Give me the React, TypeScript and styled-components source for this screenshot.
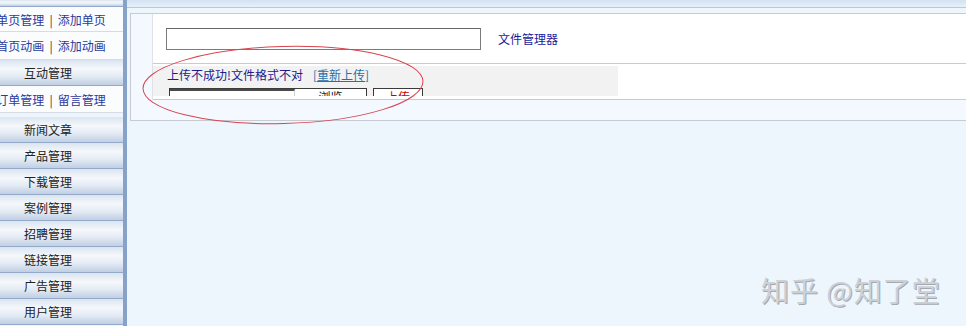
import React from "react";
import styled, { createGlobalStyle } from "styled-components";

const Global = createGlobalStyle`
  html, body { margin: 0; padding: 0; }
  body {
    width: 966px; height: 326px; overflow: hidden;
    background: #eef6fd;
    font-family: "Noto Sans CJK SC", "Noto Sans", sans-serif;
    font-size: 12px;
  }
`;

const Page = styled.div`
  position: relative;
  display: flex;
  width: 966px;
  height: 326px;
  overflow: hidden;
`;

const Sidebar = styled.aside`
  width: 123px;
  flex: none;
  overflow: hidden;
  border-right: 4px solid #86a2c8;
  background: #eef4fb;
`;

const Menu = styled.div`
  width: 150px;
  margin-left: -27px;
  display: flex;
  flex-direction: column;
`;

const SectionButton = styled.div<{ $h?: number }>`
  height: ${(p) => p.$h ?? 25}px;
  border-bottom: 1px solid #93aacb;
  background: linear-gradient(to bottom, #dae4f0 0%, #f5f8fc 35%, #e4ebf4 65%, #c0cfe3 100%);
  display: flex;
  align-items: center;
  justify-content: center;
  color: #222;
  font-size: 12px;
  line-height: 1;
`;

const LinkRow = styled.div<{ $h: number }>`
  height: ${(p) => p.$h}px;
  border-bottom: 1px solid #d6dce6;
  background: #fbfcfe;
  display: flex;
  align-items: center;
  justify-content: center;
  padding-left: 6px;
  font-size: 12px;
  color: #2a3a9c;
`;

const Sep = styled.span`
  color: #333;
  margin: 0 5px;
`;

const Gap = styled.div<{ $h: number }>`
  height: ${(p) => p.$h}px;
  background: #eef4fb;
`;

const Main = styled.main`
  flex: 1;
  display: flex;
  flex-direction: column;
  background: #eef6fd;
`;

const TopStrip = styled.div`
  height: 7px;
  border-bottom: 1px solid #b9c7d6;
  background: linear-gradient(to bottom, #d2e2f2, #e8f1fa);
`;

const Panel = styled.section`
  margin: 5px 0 0 3px;
  height: 106px;
  border: 1px solid #c7ccd2;
  border-right: none;
  background: #f3f9fe;
  padding-left: 21px;
  display: flex;
  flex-direction: column;
`;

const FormTable = styled.div`
  display: flex;
  flex-direction: column;
  border-left: 1px solid #dfe3e8;
  background: #fff;
`;

const FormRow = styled.div<{ $h: number }>`
  height: ${(p) => p.$h}px;
  border-bottom: 1px solid #c9cbcd;
  display: flex;
  align-items: center;
  background: #fff;
`;

const PathInput = styled.input`
  box-sizing: border-box;
  margin-left: 13px;
  width: 315px;
  height: 22px;
  border: 1px solid #7b7b7b;
  border-top-color: #666;
  background: #fff;
  padding: 0;
`;

const FileLink = styled.a`
  margin-left: 17px;
  color: #1a1a9e;
  font-size: 12px;
  text-decoration: none;
`;

const UploadFrame = styled.div`
  align-self: flex-end;
  margin-top: 2px;
  width: 451px;
  height: 30px;
  margin-bottom: 3px;
  padding-left: 14px;
  background: #f2f2f3;
  overflow: hidden;
  display: flex;
  flex-direction: column;
`;

const MsgLine = styled.div`
  height: 19px;
  display: flex;
  align-items: center;
  font-size: 12px;
  color: #1c1c8e;
  white-space: nowrap;
`;

const Retry = styled.span`
  margin-left: 10px;
  color: #2a6fa8;
  a { color: #2a6fa8; text-decoration: underline; }
`;

const FileControls = styled.div`
  margin-top: 5px;
  display: flex;
  gap: 6px;
  padding-left: 2px;
`;

const FileBox = styled.div`
  width: 196px;
  height: 14px;
  border: 1px solid #3a3a3a;
  border-bottom: none;
  display: flex;
  background: #fff;
`;

const FileText = styled.div`
  width: 124px;
  border-top: 2px solid #4a4a4a;
  border-right: 1px solid #d0d0d0;
  background: #fff;
`;

const Browse = styled.div`
  flex: 1;
  display: flex;
  justify-content: center;
  font-size: 12px;
  line-height: 12px;
  padding-top: 2px;
  color: #111;
`;

const UploadBtn = styled.div`
  width: 48px;
  height: 14px;
  border: 1px solid #3a3a3a;
  border-bottom: none;
  display: flex;
  justify-content: center;
  font-size: 12px;
  line-height: 12px;
  padding-top: 2px;
  color: #c00;
  background: #fff;
`;

const Ring = styled.svg`
  position: absolute;
  left: 0;
  top: 0;
  pointer-events: none;
`;

const Watermark = styled.div`
  position: absolute;
  left: 761px;
  top: 270px;
  font-size: 28px;
  letter-spacing: 1px;
  color: #cdd1d6;
  text-shadow: 1px 1px 0 #a3a9b0;
  white-space: nowrap;
`;

const buttons = ["新闻文章", "产品管理", "下载管理", "案例管理", "招聘管理", "链接管理", "广告管理", "用户管理"];

export default function App() {
  return (
    <Page>
      <Global />
      <Sidebar>
        <Menu>
          <SectionButton $h={6} />
          <LinkRow $h={24}>
            <span>单页管理</span><Sep>|</Sep><span>添加单页</span>
          </LinkRow>
          <LinkRow $h={27}>
            <span>首页动画</span><Sep>|</Sep><span>添加动画</span>
          </LinkRow>
          <SectionButton>互动管理</SectionButton>
          <LinkRow $h={26}>
            <span>订单管理</span><Sep>|</Sep><span>留言管理</span>
          </LinkRow>
          <Gap $h={4} />
          {buttons.map((b) => (
            <SectionButton key={b}>{b}</SectionButton>
          ))}
        </Menu>
      </Sidebar>
      <Main>
        <TopStrip />
        <Panel>
          <FormTable>
            <FormRow $h={49}>
              <PathInput type="text" />
              <FileLink href="#">文件管理器</FileLink>
            </FormRow>
            <FormRow $h={35}>
              <UploadFrame>
                <MsgLine>
                  上传不成功!文件格式不对
                  <Retry>[<a href="#">重新上传</a>]</Retry>
                </MsgLine>
                <FileControls>
                  <FileBox>
                    <FileText />
                    <Browse>浏览</Browse>
                  </FileBox>
                  <UploadBtn>上传</UploadBtn>
                </FileControls>
              </UploadFrame>
            </FormRow>
          </FormTable>
        </Panel>
      </Main>
      <Ring width="966" height="326" viewBox="0 0 966 326">
        <ellipse cx="283" cy="85" rx="140" ry="38.5" fill="none" stroke="#d8434f" strokeWidth="1" transform="rotate(-1.5 283 85)" />
      </Ring>
      <Watermark>知乎 @知了堂</Watermark>
    </Page>
  );
}
